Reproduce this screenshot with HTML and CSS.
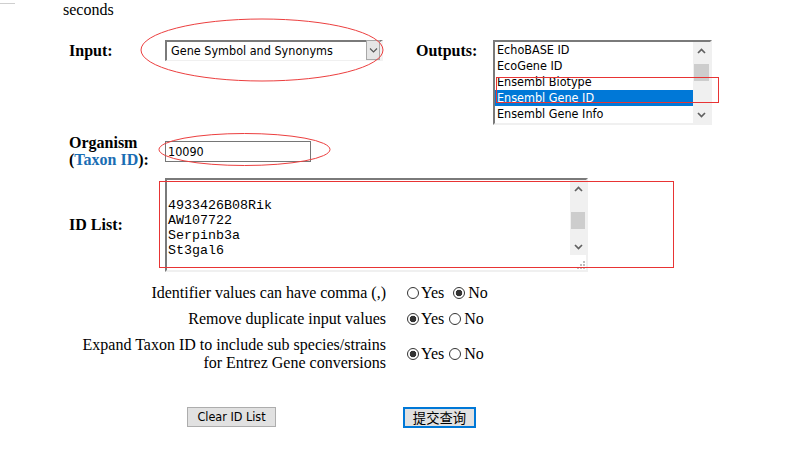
FILE: index.html
```html
<!DOCTYPE html>
<html lang="en">
<head>
<meta charset="utf-8">
<title>ID Converter</title>
<link rel="stylesheet" href="styles.css">
</head>
<body>
<div class="page">
  <div class="top"><span class="rule"></span><span class="seconds">seconds</span></div>
  <form class="form">
    <div class="row row-io">
      <div class="lbl lbl-input">Input:</div>
      <div class="select">
        <span class="select-text">Gene Symbol and Synonyms</span>
        <span class="select-btn"><svg width="9" height="6" viewBox="0 0 9 6"><path d="M1 1.5 L4.5 5 L8 1.5" stroke="#555" stroke-width="1.1" fill="none"/></svg></span>
      </div>
      <div class="lbl lbl-outputs">Outputs:</div>
      <div class="listbox">
        <ul class="options">
          <li>EchoBASE ID</li>
          <li>EcoGene ID</li>
          <li>Ensembl Biotype</li>
          <li class="selected">Ensembl Gene ID</li>
          <li>Ensembl Gene Info</li>
        </ul>
        <div class="vscroll lb-scroll">
          <span class="arrow"><svg width="9" height="6" viewBox="0 0 9 6"><path d="M1 5 L4.5 1.5 L8 5" stroke="#606060" stroke-width="1.7" fill="none"/></svg></span>
          <span class="thumb lb-thumb"></span>
          <span class="spacer"></span>
          <span class="arrow"><svg width="9" height="6" viewBox="0 0 9 6"><path d="M1 1 L4.5 4.5 L8 1" stroke="#606060" stroke-width="1.7" fill="none"/></svg></span>
        </div>
      </div>
    </div>
    <div class="row row-org">
      <div class="lbl lbl-org">Organism<br>(<a class="link" href="#">Taxon ID</a>):</div>
      <div class="textbox">10090</div>
    </div>
    <div class="row row-ids">
      <div class="lbl">ID List:</div>
      <div class="textarea">
        <pre class="ta-text">

4933426B08Rik
AW107722
Serpinb3a
St3gal6</pre>
        <div class="ta-side">
          <div class="vscroll ta-scroll">
            <span class="arrow"><svg width="9" height="6" viewBox="0 0 9 6"><path d="M1 5 L4.5 1.5 L8 5" stroke="#606060" stroke-width="1.7" fill="none"/></svg></span>
            <span class="thumb ta-thumb"></span>
            <span class="spacer"></span>
            <span class="arrow"><svg width="9" height="6" viewBox="0 0 9 6"><path d="M1 1 L4.5 4.5 L8 1" stroke="#606060" stroke-width="1.7" fill="none"/></svg></span>
          </div>
          <div class="grip"><svg width="8" height="8" viewBox="0 0 8 8"><rect x="6" y="0" width="2" height="2" fill="#bdbdbd"/><rect x="3" y="3" width="2" height="2" fill="#bdbdbd"/><rect x="6" y="3" width="2" height="2" fill="#bdbdbd"/><rect x="0" y="6" width="2" height="2" fill="#bdbdbd"/><rect x="3" y="6" width="2" height="2" fill="#bdbdbd"/><rect x="6" y="6" width="2" height="2" fill="#bdbdbd"/></svg></div>
        </div>
      </div>
    </div>
    <div class="opts">
      <div class="opt-label">Identifier values can have comma (,)</div>
      <div class="opt-radios"><span class="radio"></span>Yes<span class="radio checked gap-wide"></span>No</div>
      <div class="opt-label">Remove duplicate input values</div>
      <div class="opt-radios"><span class="radio checked"></span>Yes<span class="radio gap"></span>No</div>
      <div class="opt-label">Expand Taxon ID to include sub species/strains<br>for Entrez Gene conversions</div>
      <div class="opt-radios"><span class="radio checked"></span>Yes<span class="radio gap"></span>No</div>
    </div>
    <div class="buttons">
      <span class="btn btn-clear">Clear ID List</span>
      <span class="btn btn-submit">提交查询</span>
    </div>
  </form>
  <svg class="marks" width="803" height="469" viewBox="0 0 803 469">
    <ellipse cx="262" cy="50" rx="121" ry="31" fill="none" stroke="#ec3f3f" stroke-width="1"/>
    <rect x="496.5" y="77.5" width="222" height="25" fill="none" stroke="#e83434" stroke-width="1"/>
    <ellipse cx="244.5" cy="149.5" rx="85.5" ry="16" fill="none" stroke="#ec3f3f" stroke-width="1"/>
    <rect x="159.5" y="181.5" width="514" height="86" fill="none" stroke="#e83434" stroke-width="1"/>
  </svg>
</div>
</body>
</html>
```
FILE: styles.css
```css
html, body {
  margin: 0;
  padding: 0;
  background: #fff;
}
body {
  font-family: "Liberation Serif", "Times New Roman", serif;
  font-size: 16px;
  line-height: 18px;
  color: #000;
}
.page {
  position: relative;
  width: 803px;
  height: 469px;
  overflow: hidden;
}
.top {
  display: flex;
  align-items: flex-start;
  height: 18px;
}
.rule {
  display: block;
  width: 15px;
  height: 1px;
  margin-top: 3px;
  background: #cfcfcf;
}
.seconds {
  margin-left: 48px;
  padding-top: 1px;
}
.form {
  margin: 0;
}
.row {
  display: flex;
  padding-left: 69px;
}
.lbl {
  font-weight: bold;
}
.row-io {
  margin-top: 22px;
  align-items: flex-start;
}
.lbl-input {
  width: 96px;
  padding-top: 2px;
}
.lbl-outputs {
  width: 77px;
  margin-left: 33px;
  padding-top: 2px;
}
.select, .listbox, .textbox, .btn {
  font-family: "DejaVu Sans Condensed", "DejaVu Sans", sans-serif;
  font-stretch: condensed;
  font-size: 12.5px;
}
.select {
  box-sizing: border-box;
  width: 218px;
  height: 21px;
  display: flex;
  align-items: stretch;
  border-style: solid;
  border-width: 2px 3px 1px 2px;
  border-color: #7a7a7a #f3f3f3 #f0f0f0 #7a7a7a;
  background: #fff;
}
.select-text {
  flex: 1;
  padding-left: 4px;
  line-height: 18px;
}
.select-btn {
  width: 12px;
  margin-top: -2px;
  height: 18px;
  border: 1px solid #a8a8a8;
  background: #e6e6e6;
  display: flex;
  align-items: center;
  justify-content: center;
}
.listbox {
  box-sizing: border-box;
  width: 219px;
  height: 85px;
  display: flex;
  border-style: solid;
  border-width: 2px;
  border-color: #7a7a7a #f0f0f0 #f0f0f0 #7a7a7a;
  background: #fff;
}
.options {
  list-style: none;
  margin: 0;
  padding: 0;
  flex: 1;
  overflow: hidden;
}
.options li {
  height: 16px;
  line-height: 16px;
  padding-left: 2px;
  white-space: nowrap;
}
.options li.selected {
  background: #0078d7;
  color: #fff;
}
.vscroll {
  display: flex;
  flex-direction: column;
  background: #f0f0f0;
}
.lb-scroll {
  width: 17px;
  height: 81px;
}
.arrow {
  height: 17px;
  display: flex;
  align-items: center;
  justify-content: center;
  flex: none;
}
.thumb {
  display: block;
  background: #cdcdcd;
  margin: 0 1px;
  flex: none;
}
.lb-thumb {
  margin-top: 5px;
  height: 17px;
}
.spacer {
  flex: 1;
}
.row-org {
  margin-top: 9px;
  align-items: flex-start;
}
.lbl-org {
  width: 96px;
  line-height: 17px;
}
.link {
  color: #1a6db3;
  text-decoration: none;
}
.textbox {
  box-sizing: border-box;
  width: 146px;
  height: 21px;
  margin-top: 7px;
  border: 1px solid #767676;
  padding-left: 2px;
  line-height: 19px;
  background: #fff;
}
.row-ids {
  margin-top: 10px;
  align-items: center;
}
.row-ids .lbl {
  width: 96px;
}
.textarea {
  box-sizing: border-box;
  width: 423px;
  height: 94px;
  display: flex;
  border-style: solid;
  border-width: 2px;
  border-color: #7a7a7a #f0f0f0 #f0f0f0 #7a7a7a;
  background: #fff;
}
.ta-text {
  flex: 1;
  margin: 0;
  padding: 3px 0 0 1px;
  font-family: "Liberation Mono", "Courier New", monospace;
  font-size: 13.33px;
  line-height: 15px;
  white-space: pre;
  overflow: hidden;
}
.ta-side {
  width: 16px;
  display: flex;
  flex-direction: column;
}
.ta-scroll {
  height: 75px;
}
.ta-thumb {
  margin-top: 15px;
  height: 17px;
}
.grip {
  flex: 1;
  display: flex;
  align-items: flex-end;
  justify-content: flex-end;
  padding: 0 1px 1px 0;
}
.grip svg {
  display: block;
}
.opts {
  margin-top: 12px;
  display: grid;
  grid-template-columns: 386px auto;
  column-gap: 21px;
  row-gap: 8px;
  align-items: center;
}
.opt-label {
  text-align: right;
}
.opt-radios {
  white-space: nowrap;
}
.radio {
  display: inline-block;
  box-sizing: border-box;
  width: 12px;
  height: 12px;
  border: 1px solid #333;
  border-radius: 50%;
  background: #fff;
  vertical-align: -1px;
  margin-right: 2px;
}
.radio.checked {
  background: radial-gradient(circle, #333 0 3px, #fff 3.6px);
}
.radio.gap {
  margin-left: 5px;
  margin-right: 3px;
}
.radio.gap-wide {
  margin-left: 9px;
  margin-right: 3px;
}
.buttons {
  display: flex;
  align-items: flex-start;
  margin-top: 35px;
  padding-left: 187px;
}
.btn {
  box-sizing: border-box;
  display: flex;
  align-items: center;
  justify-content: center;
  background: #e1e1e1;
  color: #000;
}
.btn-clear {
  width: 89px;
  height: 20px;
  border: 1px solid #adadad;
}
.btn-submit {
  width: 73px;
  height: 21px;
  margin-left: 127px;
  border: 2px solid #0078d7;
  font-family: "Noto Sans CJK SC", sans-serif;
  font-size: 13.33px;
}
.marks {
  position: absolute;
  left: 0;
  top: 0;
  pointer-events: none;
}
```
